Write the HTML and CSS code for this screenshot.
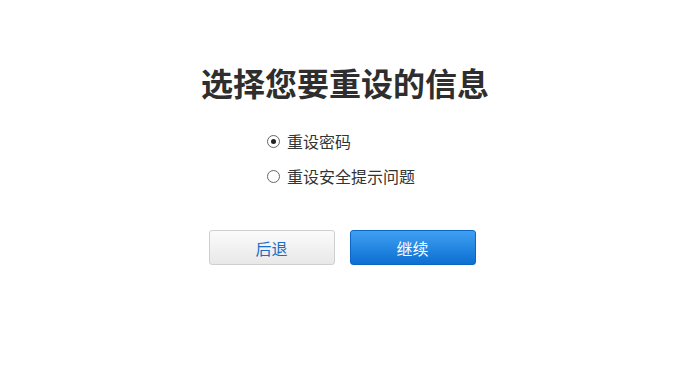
FILE: index.html
```html
<!DOCTYPE html>
<html lang="zh-CN">
<head>
    <meta charset="UTF-8">
    <meta name="viewport" content="width=device-width, initial-scale=1.0">
    <link rel="stylesheet" href="styles.css">
    <title>重设信息</title>
</head>
<body>
    <div class="page">
        <h1 class="title">选择您要重设的信息</h1>
        <div class="options">
            <label class="option">
                <span class="radio checked"></span>
                <span class="option-text">重设密码</span>
            </label>
            <label class="option">
                <span class="radio"></span>
                <span class="option-text">重设安全提示问题</span>
            </label>
        </div>
        <div class="actions">
            <button class="btn btn-back" type="button">后退</button>
            <button class="btn btn-next" type="button">继续</button>
        </div>
    </div>
</body>
</html>
```

FILE: styles.css
```css
body {
    margin: 0;
    background-color: #fff;
    font-family: "Noto Sans CJK SC", "Liberation Sans", sans-serif;
    color: #333;
}

.page {
    display: flex;
    flex-direction: column;
    align-items: center;
    padding-top: 62px;
    padding-left: 13px;
}

.title {
    margin: 0;
    font-size: 32px;
    line-height: 40px;
    font-weight: bold;
    color: #2e2e2e;
}

.options {
    display: flex;
    flex-direction: column;
    gap: 11px;
    margin-top: 27px;
    width: 290px;
    padding-left: 67px;
    box-sizing: border-box;
}

.option {
    display: flex;
    align-items: center;
    height: 24px;
    font-size: 16px;
    cursor: pointer;
}

.radio {
    width: 11px;
    height: 11px;
    border: 1px solid #666;
    border-radius: 50%;
    margin-right: 7px;
    display: flex;
    justify-content: center;
    align-items: center;
    background: #fff;
}

.radio.checked::after {
    content: "";
    width: 5px;
    height: 5px;
    border-radius: 50%;
    background: #222;
}

.option-text {
    color: #333;
}

.actions {
    display: flex;
    gap: 15px;
    margin-top: 42px;
    margin-left: -6px;
}

.btn {
    width: 126px;
    height: 35px;
    border-radius: 3px;
    font-family: "Noto Sans CJK SC", sans-serif;
    font-size: 16px;
    cursor: pointer;
}

.btn-back {
    background: linear-gradient(#fbfbfb, #e8e8e8);
    border: 1px solid #cfcfcf;
    color: #1a6fc4;
}

.btn-next {
    background: linear-gradient(#3fa0f2, #0c6fd2);
    border: 1px solid #0b66c4;
    color: #fff;
}
```
